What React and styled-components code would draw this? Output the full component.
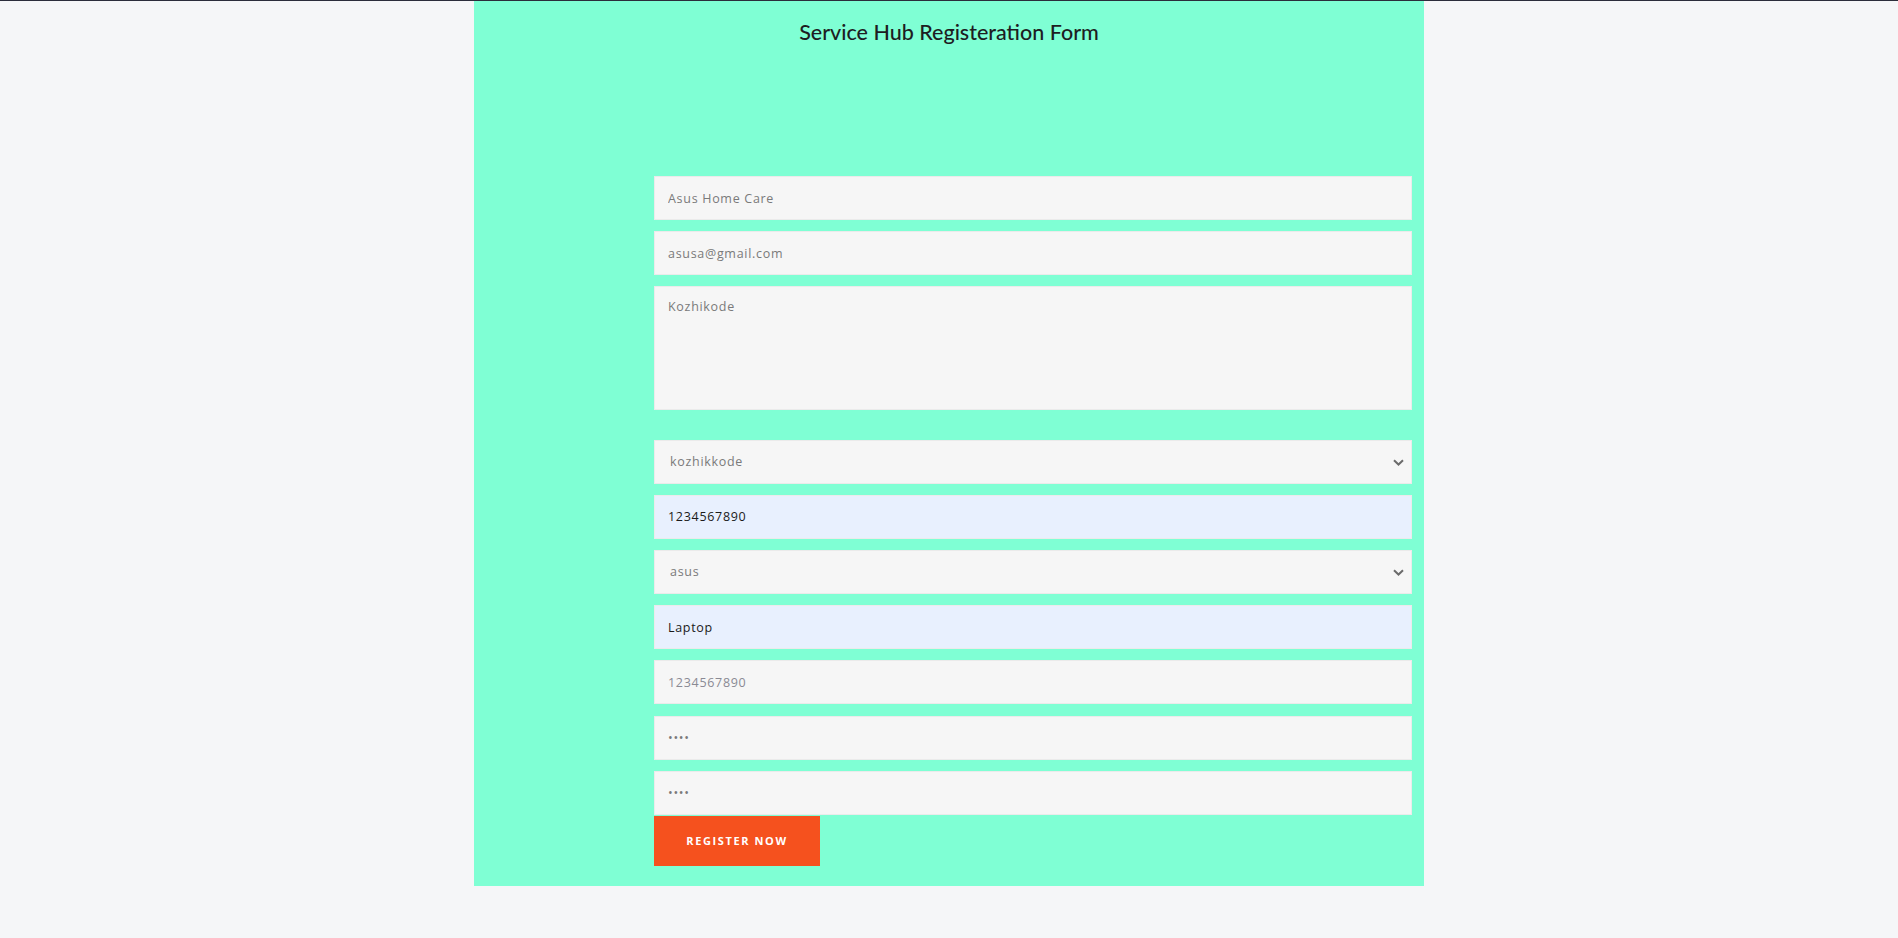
import React from "react";
import styled, { createGlobalStyle } from "styled-components";

const GlobalStyle = createGlobalStyle`
  body {
    margin: 0;
    background: #f5f6f8;
    font-family: "Open Sans", "Liberation Sans", sans-serif;
  }
`;

function Chevron() {
  return (
    <svg width="11" height="7" viewBox="0 0 11 7">
      <path d="M1 1.2l4.5 4.3L10 1.2" fill="none" stroke="#6b6b6b" strokeWidth="2" />
    </svg>
  );
}

function App() {
  return (
    <Page>
      <GlobalStyle />
      <Panel>
        <Title>Service Hub Registeration Form</Title>
        <Form onSubmit={(e) => e.preventDefault()}>
          <Fields>
            <Field type="text" defaultValue="Asus Home Care" />
            <Field type="email" defaultValue="asusa@gmail.com" />
            <Area defaultValue="Kozhikode" />
            <SelectWrap>
              <Select defaultValue="kozhikkode">
                <option value="kozhikkode">kozhikkode</option>
                <option value="calicut">calicut</option>
              </Select>
              <Arrow><Chevron /></Arrow>
            </SelectWrap>
            <Field type="text" defaultValue="1234567890" $filled />
            <SelectWrap>
              <Select defaultValue="asus">
                <option value="asus">asus</option>
                <option value="hp">hp</option>
              </Select>
              <Arrow><Chevron /></Arrow>
            </SelectWrap>
            <Field type="text" defaultValue="Laptop" $filled />
            <Field type="text" placeholder="1234567890" />
            <Field type="password" defaultValue="1234" />
            <Field type="password" defaultValue="1234" />
          </Fields>
          <Button type="submit">Register Now</Button>
        </Form>
      </Panel>
    </Page>
  );
}

const Page = styled.div`
  min-height: 100vh;
  border-top: 1px solid #2b2d3b;
  box-sizing: border-box;
`;

const Panel = styled.div`
  width: 950px;
  margin: 0 auto;
  background: #7fffd4;
  padding: 18px 12px 20px 0;
  box-sizing: border-box;
`;

const Title = styled.h2`
  margin: 0 -12px 0 0;
  text-align: center;
  font-family: Lato, "Open Sans", sans-serif;
  font-weight: 500;
  font-size: 21.5px;
  color: #1d1d22;
  line-height: 26px;
`;

const Form = styled.form`
  margin: 131px 0 0 180px;
  display: flex;
  flex-direction: column;
`;

const Fields = styled.div`
  display: flex;
  flex-direction: column;
  gap: 11.2px;
`;

const base = `
  display: block;
  width: 100%;
  box-sizing: border-box;
  border: 1px solid #ebebeb;
  background: #f6f6f6;
  font-family: "Open Sans", "Liberation Sans", sans-serif;
  font-size: 12.5px;
  letter-spacing: 0.7px;
  color: #7a7a7a;
  outline: none;
  border-radius: 0;
`;

const Field = styled.input`
  ${base}
  height: 44px;
  padding: 0 13px;
  background: ${(p) => (p.$filled ? "#e8f0fe" : "#f6f6f6")};
  color: ${(p) => (p.$filled ? "#1a1a1a" : "#7a7a7a")};
  &::placeholder {
    color: #8a8a94;
  }
`;

const Area = styled.textarea`
  ${base}
  height: 124px;
  padding: 11px 13px;
  resize: none;
  margin-bottom: 18px;
`;

const SelectWrap = styled.div`
  position: relative;
`;

const Select = styled.select`
  ${base}
  height: 44px;
  padding: 0 13px 0 15px;
  appearance: none;
`;

const Arrow = styled.span`
  position: absolute;
  right: 8px;
  top: 19px;
  display: flex;
  pointer-events: none;
`;

const Button = styled.button`
  width: 166px;
  height: 50px;
  margin-top: 1px;
  border: none;
  background: #f5511e;
  color: #fff;
  font-family: "Open Sans", "Liberation Sans", sans-serif;
  font-weight: 700;
  font-size: 11px;
  letter-spacing: 1.6px;
  text-transform: uppercase;
  cursor: pointer;
`;

export default App;
